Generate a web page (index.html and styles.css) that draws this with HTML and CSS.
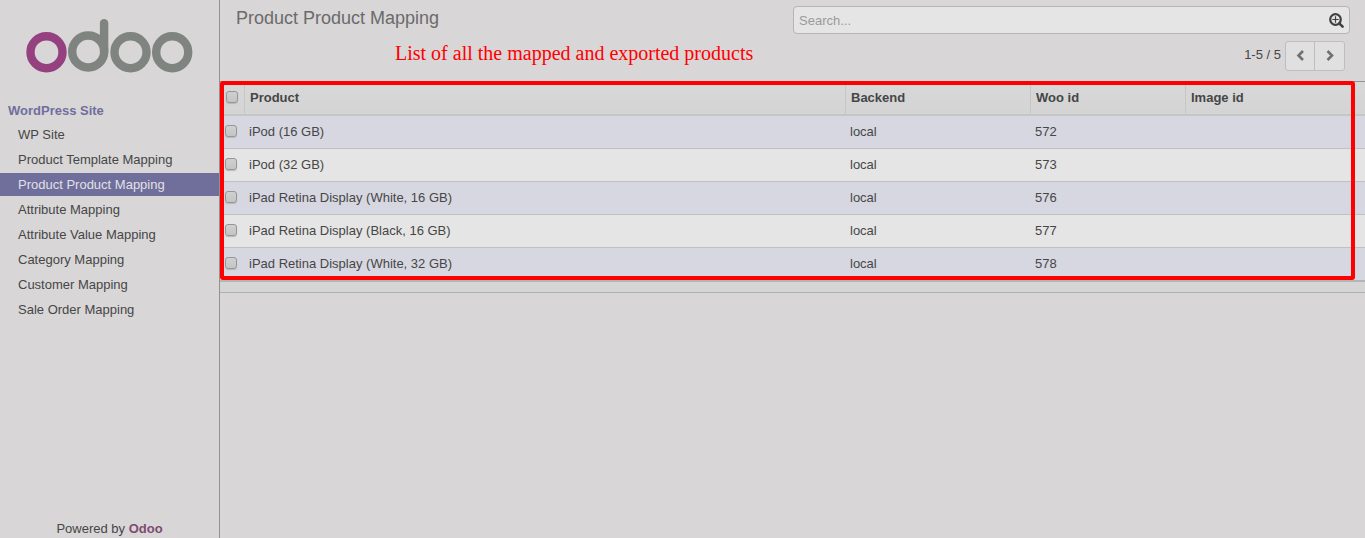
FILE: index.html
```html
<!DOCTYPE html>
<html lang="en">
<head>
<meta charset="utf-8">
<title>Product Product Mapping - Odoo</title>
<link rel="stylesheet" href="styles.css">
</head>
<body>
<div class="app">
  <aside class="sidebar">
    <svg class="logo" width="168" height="56" viewBox="0 0 168 56" role="img" aria-label="odoo">
      <g fill="none" stroke-width="8.4">
        <circle cx="20.5" cy="34.2" r="16" stroke="#96417f"/>
        <g stroke="#808481">
          <circle cx="62.200" cy="33.500" r="16"/>
          <path d="M78.100 33.500V5.300" stroke-linecap="round"/>
          <circle cx="104.500" cy="34.200" r="16"/>
          <circle cx="146.200" cy="34.200" r="16"/>
        </g>
      </g>
    </svg>
    <h2 class="menu-title">WordPress Site</h2>
    <ul class="menu">
      <li class="menu-item">WP Site</li>
      <li class="menu-item">Product Template Mapping</li>
      <li class="menu-item active">Product Product Mapping</li>
      <li class="menu-item">Attribute Mapping</li>
      <li class="menu-item">Attribute Value Mapping</li>
      <li class="menu-item">Category Mapping</li>
      <li class="menu-item">Customer Mapping</li>
      <li class="menu-item">Sale Order Mapping</li>
    </ul>
    <div class="footer">Powered by <b class="brand">Odoo</b></div>
  </aside>
  <main class="content">
    <header class="header">
      <div class="header-row">
        <h1 class="title">Product Product Mapping</h1>
        <div class="search">
          <span class="search-text">Search...</span>
          <svg width="16" height="16" viewBox="0 0 16 16" fill="none" stroke="#404040">
            <circle cx="7.500" cy="7.500" r="5.300" stroke-width="2.200"/>
            <path d="M11.300 11.300L14.600 14.600" stroke-width="2.600" stroke-linecap="round"/>
            <path d="M7.500 4.300v6.400M4.300 7.500h6.400" stroke-width="1.200"/>
          </svg>
        </div>
      </div>
      <div class="pager">
        <span>1-5 / 5</span>
        <div class="pager-buttons">
          <span class="pager-button"><svg width="10" height="12" viewBox="0 0 10 12"><path d="M8 1L3.500 5.500L8 10"/></svg></span>
          <span class="pager-button"><svg width="10" height="12" viewBox="0 0 10 12"><path d="M2.500 1L7 5.500L2.500 10"/></svg></span>
        </div>
      </div>
      <div class="note">List of all the mapped and exported products</div>
    </header>
    <div class="list">
      <div class="row head"><div><i class="check"></i></div><div>Product</div><div>Backend</div><div>Woo id</div><div>Image id</div></div>
      <div class="row"><div><i class="check"></i></div><div>iPod (16 GB)</div><div>local</div><div>572</div><div></div></div>
      <div class="row"><div><i class="check"></i></div><div>iPod (32 GB)</div><div>local</div><div>573</div><div></div></div>
      <div class="row"><div><i class="check"></i></div><div>iPad Retina Display (White, 16 GB)</div><div>local</div><div>576</div><div></div></div>
      <div class="row"><div><i class="check"></i></div><div>iPad Retina Display (Black, 16 GB)</div><div>local</div><div>577</div><div></div></div>
      <div class="row"><div><i class="check"></i></div><div>iPad Retina Display (White, 32 GB)</div><div>local</div><div>578</div><div></div></div>
      <div class="list-foot"></div>
      <div class="highlight"></div>
    </div>
  </main>
</div>
</body>
</html>
```
FILE: styles.css
```css
* { box-sizing: border-box; }
body {
  margin: 0;
  background: #d8d6d7;
  color: #464646;
  font: 13px/18px "Liberation Sans", Arial, sans-serif;
}
.app { display: flex; height: 538px; overflow: hidden; }
.sidebar {
  display: flex;
  flex-direction: column;
  width: 220px;
  border-right: 1px solid #929292;
}
.logo { display: block; flex: none; margin: 18px 0 0 26px; }
.menu-title {
  margin: 28px 0 0 8px;
  color: #706e9e;
  font-size: 13px;
  line-height: 18px;
}
.menu { display: grid; gap: 2px; margin: 3px 0 0; padding: 0; list-style: none; }
.menu-item { height: 23px; padding-left: 18px; line-height: 23px; }
.active { background: #706e9b; color: #e0e0e6; }
.footer { margin-top: auto; text-align: center; }
.brand { color: #7d4c70; }
.content { flex: 1; }
.header {
  position: relative;
  height: 82px;
  padding: 6px 15px 0 16px;
  border-bottom: 1px solid #929292;
}
.header-row { display: flex; justify-content: space-between; }
.title { margin: 0; color: #6b6b6b; font-size: 18px; line-height: 24px; font-weight: 400; }
.search {
  display: flex;
  align-items: center;
  justify-content: space-between;
  width: 557px;
  height: 28px;
  padding: 0 5px;
  border: 1px solid #b5b5b5;
  border-radius: 4px;
  background: #e5e5e5;
  color: #9a9a9a;
}
.search-text { padding-top: 2px; }
.pager {
  display: flex;
  justify-content: flex-end;
  gap: 4px;
  margin: 7px 5px 0 0;
  line-height: 28px;
}
.pager-buttons {
  display: grid;
  grid-template-columns: 28px 30px;
  width: 60px;
  height: 30px;
  border: 1px solid #bebebe;
  border-radius: 3px;
  background: #e0e0e0;
}
.pager-button { display: flex; align-items: center; justify-content: center; }
.pager-button + .pager-button { border-left: 1px solid #bebebe; }
.pager-button path { fill: none; stroke: #707070; stroke-width: 2.6; }
.note {
  position: absolute;
  top: 41px;
  left: 175px;
  color: #f00;
  font: 20px/24px "Liberation Serif", "Times New Roman", serif;
  white-space: nowrap;
}
.list { position: relative; }
.row {
  display: grid;
  grid-template-columns: 25px 601px 185px 155px 1fr;
  height: 33px;
  border-bottom: 1px solid #c0c0c0;
  background: #e5e5e5;
  line-height: 32px;
}
.row > div { padding-left: 4px; }
.row:nth-child(even) { background: #d7d7e1; }
.row > div:first-child { display: flex; align-items: center; padding-left: 5px; }
.head {
  height: 34px;
  border-bottom: 2px solid #c6c6c6;
  background: linear-gradient(#d8d8d8, #d4d4d4);
  font-weight: 700;
}
.head > div { padding-left: 5px; border-right: 1px solid #c6c6c6; }
.row.head > div:first-child { padding-left: 6px; }
.head > div:last-child { border-right: 0; }
.check {
  width: 12px;
  height: 12px;
  margin-bottom: 2px;
  border: 1px solid #969696;
  border-radius: 3px;
  background: linear-gradient(#d0d0d0, #c4c4c4);
  box-shadow: 0 1px 1px #b9b9b9;
}
.list-foot {
  height: 13px;
  margin-top: -1px;
  border-top: 2px solid #b5b5b5;
  border-bottom: 1px solid #b0b0b0;
  background: #d5d5d5;
}
.highlight {
  position: absolute;
  top: -1px;
  left: 0;
  width: 1135px;
  height: 199px;
  border: 4px solid #f00;
  border-radius: 3px;
}
```
